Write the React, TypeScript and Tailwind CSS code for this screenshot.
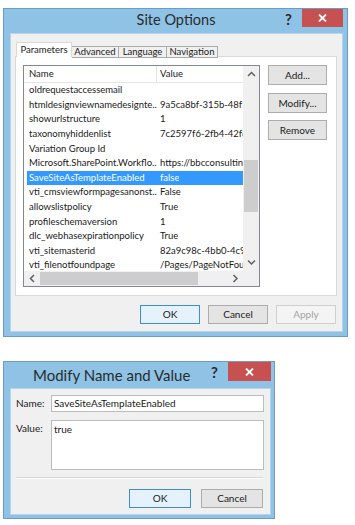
import React from "react";

const FONT = { fontFamily: 'Lato, "Noto Sans", Arial, sans-serif' };

const rows: [string, string][] = [
  ["oldrequestaccessemail", ""],
  ["htmldesignviewnamedesignte...", "9a5ca8bf-315b-48f5-"],
  ["showurlstructure", "1"],
  ["taxonomyhiddenlist", "7c2597f6-2fb4-42f6-"],
  ["Variation Group Id", ""],
  ["Microsoft.SharePoint.Workflo...", "https://bbcconsulting"],
  ["SaveSiteAsTemplateEnabled", "false"],
  ["vti_cmsviewformpagesanonst...", "False"],
  ["allowslistpolicy", "True"],
  ["profileschemaversion", "1"],
  ["dlc_webhasexpirationpolicy", "True"],
  ["vti_sitemasterid", "82a9c98c-4bb0-4c91"],
  ["vti_filenotfoundpage", "/Pages/PageNotFour"],
];

function CloseBtn({ w, h }: { w: string; h: string }) {
  return (
    <div className={`${w} ${h} bg-[#c75050] flex items-center justify-center shrink-0`}>
      <svg width="9" height="8" viewBox="0 0 9 8">
        <path d="M1 0.5 L8 7.5 M8 0.5 L1 7.5" stroke="#fff" strokeWidth="1.8" />
      </svg>
    </div>
  );
}

function Btn({
  children,
  className = "",
  variant = "normal",
}: {
  children: React.ReactNode;
  className?: string;
  variant?: "normal" | "default" | "disabled";
}) {
  const v =
    variant === "default"
      ? "border-[#3c8fd6] bg-[#e5f1fb] text-[#1a1a1a]"
      : variant === "disabled"
      ? "border-[#cfcfcf] bg-[#f4f4f4] text-[#a3a3a3]"
      : "border-[#acacac] bg-[#e4e4e4] text-[#1a1a1a]";
  return (
    <div className={`border flex items-center justify-center text-[10px] ${v} ${className}`}>
      {children}
    </div>
  );
}

function Arrow({ dir }: { dir: "up" | "down" | "left" | "right" }) {
  const d =
    dir === "up"
      ? "M1 5 L4.5 1.5 L8 5"
      : dir === "down"
      ? "M1 1.5 L4.5 5 L8 1.5"
      : dir === "left"
      ? "M5 1 L1.5 4.5 L5 8"
      : "M1.5 1 L5 4.5 L1.5 8";
  const vert = dir === "up" || dir === "down";
  return (
    <svg width={vert ? 9 : 7} height={vert ? 7 : 9} viewBox={vert ? "0 0 9 7" : "0 0 7 9"}>
      <path d={d} stroke="#606060" strokeWidth="1.5" fill="none" />
    </svg>
  );
}

export default function App() {
  return (
    <div className="w-[355px] h-[525px] bg-white text-[#1a1a1a] pt-[8px] pl-[3px]" style={FONT}>
      {/* Site Options dialog */}
      <div className="w-[345px] h-[329px] border border-[#6d9bc5] bg-[#8ec3e6] flex flex-col pl-[6px] pr-[4px] pb-[4px]">
        <div className="h-[24px] flex items-start">
          <div className="w-[57px] shrink-0" />
          <div className="flex-1 flex items-center justify-center h-[22px] text-[14.5px] text-[#2b2b2b] whitespace-nowrap">
            Site Options
          </div>
          <div className="w-[17px] h-[20px] shrink-0 flex items-center justify-start text-[15px] font-bold text-[#2b2b2b]">
            ?
          </div>
          <CloseBtn w="w-[41px]" h="h-[18px]" />
        </div>
        <div className="flex-1 bg-[#f0f0f0] border border-[#b8d4ea] flex flex-col pt-[8px] pl-[4px] pr-[5px]">
          {/* tabs */}
          <div className="flex items-end h-[15px] pl-[1px] text-[9.5px] relative z-10">
            <div className="w-[56px] h-[15px] bg-white border border-b-0 border-[#d9d9d9] flex items-center justify-center">
              Parameters
            </div>
            <div className="w-[47px] h-[12px] mb-[-1px] bg-[#f0f0f0] border border-[#acacac] border-l-0 flex items-center justify-center">
              Advanced
            </div>
            <div className="w-[48px] h-[12px] mb-[-1px] bg-[#f0f0f0] border border-[#acacac] border-l-0 flex items-center justify-center">
              Language
            </div>
            <div className="w-[51px] h-[12px] mb-[-1px] bg-[#f0f0f0] border border-[#acacac] border-l-0 flex items-center justify-center">
              Navigation
            </div>
          </div>
          {/* panel */}
          <div className="h-[240px] bg-white border border-[#d9d9d9] flex pt-[8px] pl-[7px] pr-[8px] -mt-[1px]">
            {/* list view */}
            <div className="w-[237px] h-[222px] border border-[#828790] bg-white flex flex-col text-[9.5px]">
              <div className="flex-1 flex min-h-0">
                <div className="flex-1 flex flex-col min-w-0 overflow-hidden">
                  <div className="h-[17px] flex shrink-0 border-b border-[#e5e5e5]">
                    <div className="w-[133px] pl-[5px] flex items-center border-r border-[#e5e5e5]">Name</div>
                    <div className="pl-[3px] flex items-center">Value</div>
                  </div>
                  <div className="flex flex-col pl-[3px]">
                    {rows.map(([n, v], i) => {
                      const sel = i === 6;
                      return (
                        <div
                          key={i}
                          className={`h-[14.6px] shrink-0 flex items-center whitespace-nowrap ${
                            sel ? "bg-[#3399ff] text-white" : ""
                          }`}
                        >
                          <div className="w-[130px] shrink-0 pl-[2px] overflow-hidden">{n}</div>
                          <div className="pl-[3px] overflow-hidden">{v}</div>
                        </div>
                      );
                    })}
                  </div>
                </div>
                {/* vertical scrollbar */}
                <div className="w-[16px] bg-[#f0f0f0] flex flex-col items-stretch">
                  <div className="h-[17px] flex items-center justify-center">
                    <Arrow dir="up" />
                  </div>
                  <div className="h-[77px]" />
                  <div className="h-[52px] mx-[1px] bg-[#cdcdcd]" />
                  <div className="flex-1" />
                  <div className="h-[17px] flex items-center justify-center">
                    <Arrow dir="down" />
                  </div>
                </div>
              </div>
              {/* horizontal scrollbar */}
              <div className="h-[15px] flex">
                <div className="flex-1 bg-[#f0f0f0] flex items-center">
                  <div className="w-[16px] flex items-center justify-center">
                    <Arrow dir="left" />
                  </div>
                  <div className="w-[158px] h-[13px] bg-[#cdcdcd]" />
                  <div className="flex-1" />
                  <div className="w-[16px] flex items-center justify-center">
                    <Arrow dir="right" />
                  </div>
                </div>
                <div className="w-[16px] bg-[#f0f0f0]" />
              </div>
            </div>
            {/* side buttons */}
            <div className="ml-[8px] flex flex-col">
              <Btn className="w-[59px] h-[20px]">Add...</Btn>
              <Btn className="w-[59px] h-[20px] mt-[8px]">Modify...</Btn>
              <Btn className="w-[59px] h-[20px] mt-[7px]">Remove</Btn>
            </div>
          </div>
          {/* bottom buttons */}
          <div className="flex justify-end gap-[8px] mt-[9px] pr-[1px]">
            <Btn variant="default" className="w-[60px] h-[19px]">OK</Btn>
            <Btn className="w-[60px] h-[19px]">Cancel</Btn>
            <Btn variant="disabled" className="w-[60px] h-[19px]">Apply</Btn>
          </div>
        </div>
      </div>

      {/* Modify Name and Value dialog */}
      <div className="mt-[24px] w-[272px] h-[158px] border border-[#6d9bc5] bg-[#8ec3e6] flex flex-col pl-[6px] pr-[3px] pb-[3px]">
        <div className="h-[26px] flex items-start">
          <div className="flex-1 min-w-0 flex items-center h-[26px] text-[15px] text-[#2b2b2b] pl-[23px] whitespace-nowrap">
            Modify Name and Value
          </div>
          <div className="w-[17px] h-[20px] shrink-0 flex items-center justify-start text-[15px] font-bold text-[#2b2b2b]">
            ?
          </div>
          <CloseBtn w="w-[43px]" h="h-[19px]" />
        </div>
        <div className="flex-1 bg-[#f0f0f0] border border-[#b8d4ea] flex flex-col pt-[6px] pl-[5px] pr-[6px] text-[10px]">
          <div className="flex items-center">
            <div className="w-[35px]">Name:</div>
            <div className="w-[213px] h-[17px] bg-white border border-[#bcbcbc] flex items-center pl-[2px]">
              SaveSiteAsTemplateEnabled
            </div>
          </div>
          <div className="flex mt-[8px]">
            <div className="w-[35px] pt-[1px]">Value:</div>
            <div className="w-[213px] h-[50px] bg-white border border-[#bcbcbc] pl-[2px] pt-[1px]">true</div>
          </div>
          <div className="mt-[7px] h-[2px] w-[247px] border-t border-[#d5d5d5] border-b border-b-white" />
          <div className="flex justify-end gap-[10px] mt-[10px] pr-[1px]">
            <Btn variant="default" className="w-[62px] h-[19px]">OK</Btn>
            <Btn className="w-[62px] h-[19px]">Cancel</Btn>
          </div>
        </div>
      </div>
    </div>
  );
}
